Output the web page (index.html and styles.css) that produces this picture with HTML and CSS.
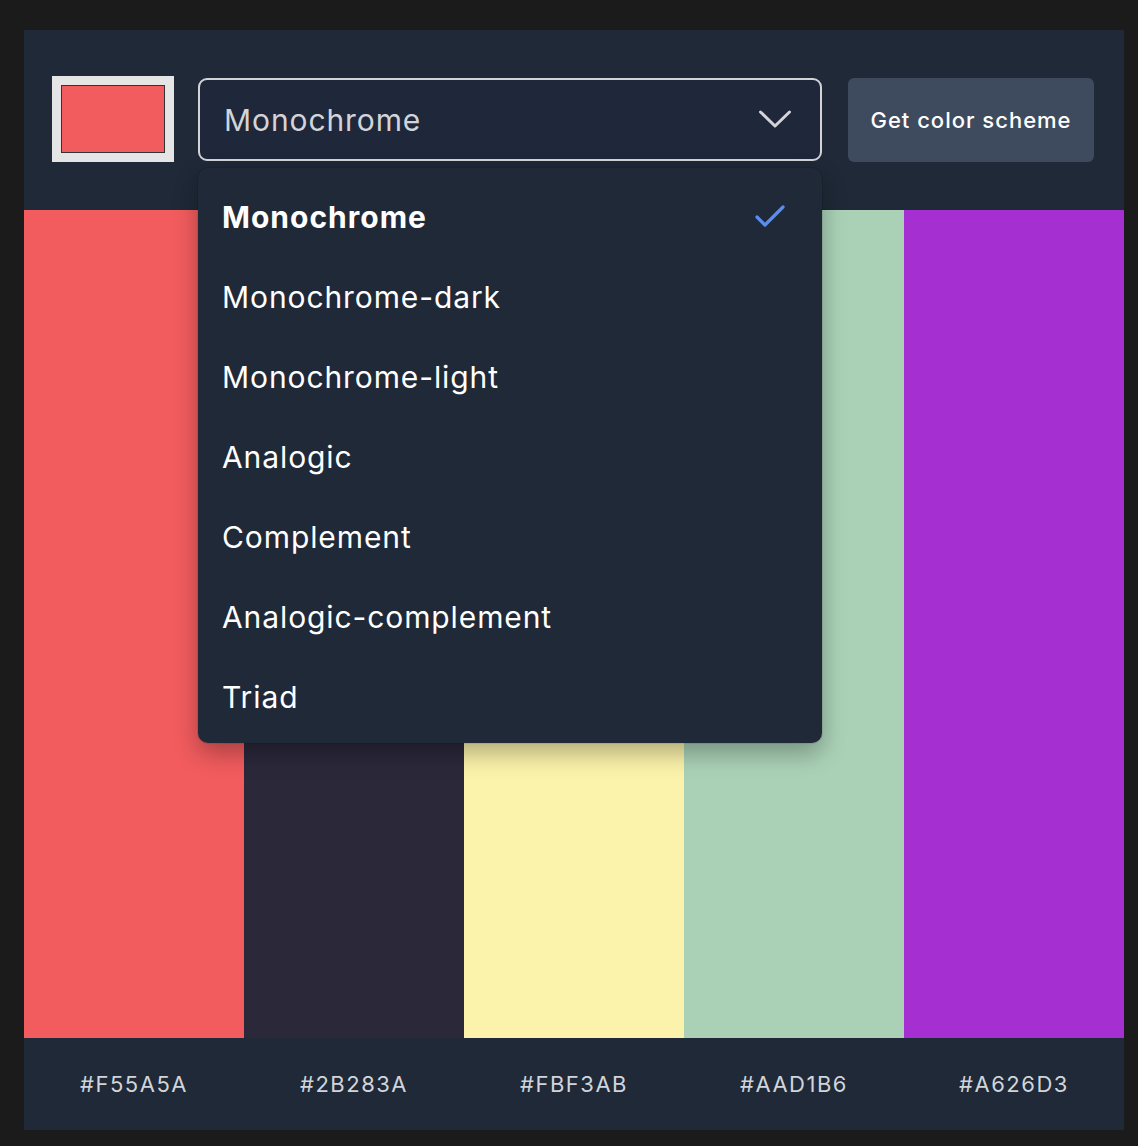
FILE: index.html
```html
<!DOCTYPE html>
<html lang="en">
<head>
<meta charset="utf-8">
<title>Color Scheme</title>
<link rel="stylesheet" href="styles.css">
</head>
<body>
<main class="card">
  <header class="controls">
    <div class="picker"><div class="picker-fill"></div></div>
    <div class="select-wrap">
      <div class="select">
        <span class="select-value">Monochrome</span>
        <svg class="chevron" width="34" height="20" viewBox="0 0 34 20"><path d="M2.5 3 L17 17 L31.5 3" fill="none" stroke="#d4d4d8" stroke-width="3" stroke-linecap="round" stroke-linejoin="round"/></svg>
      </div>
      <ul class="menu">
        <li class="item selected">Monochrome
          <svg class="check" width="32" height="24" viewBox="0 0 32 24"><path d="M3 13 L11 21 L29 3" fill="none" stroke="#5b8cf2" stroke-width="3.2" stroke-linecap="round" stroke-linejoin="round"/></svg>
        </li>
        <li class="item">Monochrome-dark</li>
        <li class="item">Monochrome-light</li>
        <li class="item">Analogic</li>
        <li class="item">Complement</li>
        <li class="item">Analogic-complement</li>
        <li class="item">Triad</li>
      </ul>
    </div>
    <button class="btn">Get color scheme</button>
  </header>
  <section class="swatches">
    <div class="swatch c1"></div>
    <div class="swatch c2"></div>
    <div class="swatch c3"></div>
    <div class="swatch c4"></div>
    <div class="swatch c5"></div>
  </section>
  <footer class="labels">
    <span>#F55A5A</span>
    <span>#2B283A</span>
    <span>#FBF3AB</span>
    <span>#AAD1B6</span>
    <span>#A626D3</span>
  </footer>
</main>
</body>
</html>
```

FILE: styles.css
```css
* { box-sizing: border-box; }
html, body { margin: 0; }
body {
  background: #1b1b1b;
  padding: 30px 14px 16px 24px;
  font-family: Inter, "Noto Sans", sans-serif;
}
.card {
  width: 1100px;
  background: #1f2937;
}
.controls {
  height: 180px;
  display: flex;
  align-items: center;
  padding: 0 30px 0 28px;
}
.picker {
  width: 122px;
  height: 86px;
  background: #e5e5e5;
  padding: 9px;
  flex: none;
  margin-top: -2px;
}
.picker-fill {
  width: 100%;
  height: 100%;
  background: #f25c5e;
  border: 1px solid #333;
}
.select-wrap {
  position: relative;
  width: 624px;
  margin-left: 24px;
  flex: none;
}
.select {
  height: 83px;
  border: 2px solid #d4d4d8;
  border-radius: 9px;
  background: #1e283a;
  display: flex;
  align-items: center;
  justify-content: space-between;
  padding: 0 28px 0 24px;
  margin-top: -2px;
}
.select-value {
  font-size: 30px;
  color: #d4d4d8;
  letter-spacing: 0.9px;
  margin-top: 1px;
}
.menu {
  position: absolute;
  left: 0;
  top: 88px;
  width: 624px;
  margin: 0;
  padding: 9px 0 6px;
  list-style: none;
  background: #1f2937;
  border-radius: 10px;
  box-shadow: 0 10px 25px rgba(0,0,0,0.3), 0 0 0 1px rgba(0,0,0,0.08);
  z-index: 5;
}
.item {
  height: 80px;
  display: flex;
  align-items: center;
  justify-content: space-between;
  padding: 0 36px 0 24px;
  font-size: 30px;
  color: #ffffff;
  letter-spacing: 0.9px;
}
.item.selected { font-weight: 700; letter-spacing: 1px; }
.check { margin-top: -2px; }
.btn {
  width: 246px;
  height: 84px;
  margin-left: 26px;
  flex: none;
  border: none;
  border-radius: 6px;
  background: #3e4b5e;
  color: #ffffff;
  font-family: inherit;
  font-size: 22px;
  font-weight: 500;
  letter-spacing: 1px;
  padding: 0;
}
.swatches {
  display: grid;
  grid-template-columns: repeat(5, 1fr);
  height: 828px;
}
.c1 { background: #f25c5e; }
.c2 { background: #2b283a; }
.c3 { background: #fbf3ab; }
.c4 { background: #aad1b6; }
.c5 { background: #a62fd2; }
.labels {
  display: grid;
  grid-template-columns: repeat(5, 1fr);
  height: 92px;
  align-items: center;
  text-align: center;
  font-size: 22px;
  color: #d1d5db;
  letter-spacing: 1.5px;
}
```
